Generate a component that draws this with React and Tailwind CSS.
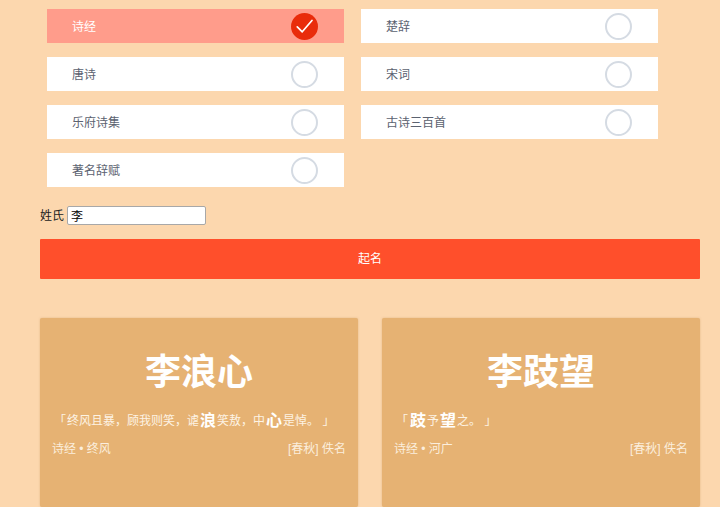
const sources = [
  { name: "诗经", checked: true },
  { name: "楚辞" },
  { name: "唐诗" },
  { name: "宋词" },
  { name: "乐府诗集" },
  { name: "古诗三百首" },
  { name: "著名辞赋" },
];

// full-width comma
const COMMA = "\uFF0C";

function Option({ name, checked }) {
  return (
    <div
      className={`h-[34px] pl-[25px] pr-[26px] flex items-center justify-between text-xs ${
        checked ? "bg-[#ff9c8b] text-white" : "bg-white text-[#5b6270]"
      }`}
    >
      <span className="pt-[2px]">{name}</span>
      {checked ? (
        <span className="w-[27px] h-[27px] rounded-full bg-[#e92c0b] flex items-center justify-center">
          <svg width="17" height="17" viewBox="0 0 24 24" fill="none" stroke="white" strokeWidth="2.4" strokeLinecap="round" strokeLinejoin="round">
            <path d="M1.8 12.5l7 7L22.5 3.5" />
          </svg>
        </span>
      ) : (
        <span className="w-[27px] h-[27px] rounded-full border-2 border-[#d5dbe3]" />
      )}
    </div>
  );
}

function Card({ title, quote, source, author }) {
  return (
    <div className="h-[189px] bg-[#e6b273] rounded-[2px] px-3 pt-[28px] text-white shadow-[0_0_2px_rgba(200,150,90,0.5)]">
      <h2 className="text-[36px] leading-[54px] font-bold text-center">{title}</h2>
      <p className="mt-[9px] pl-[2px] h-[24px] flex items-center text-xs text-[#fdf3e4] whitespace-pre">{quote}</p>
      <div className="mt-[7px] flex justify-between text-xs leading-[18px] text-[#fbeedd]">
        <span>{source}</span>
        <span>{author}</span>
      </div>
    </div>
  );
}

function Hi({ children }) {
  return <b className="text-base font-bold text-white mx-[1px]">{children}</b>;
}

export default function App() {
  return (
    <div className="h-[507px] overflow-hidden bg-[#fcd7ae] pl-10 pr-5 pt-[9px] font-['Liberation_Sans','Noto_Sans_CJK_SC',sans-serif]">
      {/* options */}
      <div className="w-[611px] ml-[7px] grid grid-cols-2 gap-x-[17px] gap-y-[14px]">
        {sources.map((s) => (
          <Option key={s.name} name={s.name} checked={s.checked} />
        ))}
      </div>

      {/* surname */}
      <div className="mt-[19px] h-[19px] flex items-center text-xs text-[#222]">
        <label>姓氏</label>
        <input
          defaultValue="李"
          className="ml-[3px] w-[139px] h-[19px] px-[3px] text-xs text-black bg-white border border-[#a8a8a8] rounded-[2px]"
        />
      </div>

      <button className="mt-[14px] w-full h-[40px] bg-[#ff4f2b] text-white text-xs rounded-[1px]">起名</button>

      {/* results */}
      <div className="mt-[39px] grid grid-cols-2 gap-x-[24px]">
        <Card
          title="李浪心"
          quote={
            <>
              <span className="mr-[1px]">「</span>
              {`终风且暴${COMMA}顾我则笑${COMMA}谑`}
              <Hi>浪</Hi>
              {`笑敖${COMMA}中`}
              <Hi>心</Hi>
              {"是悼。 」"}
            </>
          }
          source="诗经 • 终风"
          author="[春秋] 佚名"
        />
        <Card
          title="李跂望"
          quote={
            <>
              <span className="mr-[1px]">「</span>
              <Hi>跂</Hi>
              {"予"}
              <Hi>望</Hi>
              {"之。 」"}
            </>
          }
          source="诗经 • 河广"
          author="[春秋] 佚名"
        />
      </div>
    </div>
  );
}
